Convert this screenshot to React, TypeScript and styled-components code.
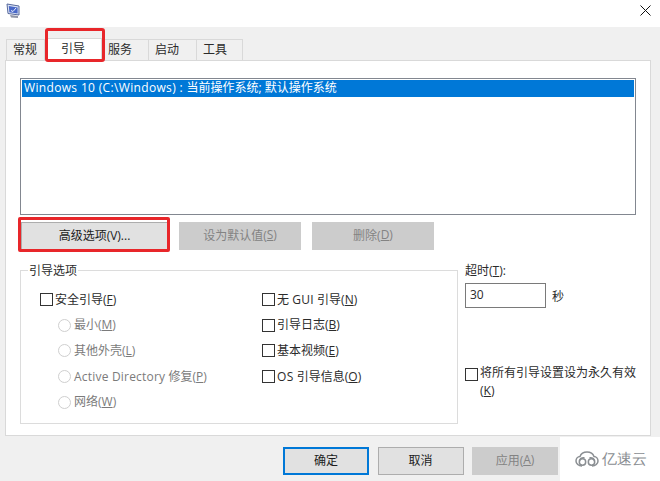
import React from "react";
import styled, { createGlobalStyle } from "styled-components";

const GlobalStyle = createGlobalStyle`
  html, body {
    margin: 0;
    padding: 0;
    background: #f0f0f0;
  }
  * {
    box-sizing: border-box;
  }
`;

const Dialog = styled.div`
  width: 660px;
  height: 481px;
  background: #f0f0f0;
  display: flex;
  flex-direction: column;
  overflow: hidden;
  font-family: "Open Sans", "Noto Sans CJK SC", sans-serif;
  font-size: 12px;
  color: #2b2b2b;
`;

const TitleBar = styled.div`
  height: 27px;
  flex: none;
  background: #fff;
  display: flex;
  align-items: flex-start;
  justify-content: space-between;
  padding: 3px 9px 0 6px;
`;

const CloseIcon = styled.svg`
  width: 11px;
  height: 11px;
  margin-top: 2px;
`;

const TabStrip = styled.div`
  height: 33px;
  flex: none;
  display: flex;
  align-items: flex-end;
  padding-left: 6px;
`;

const Tab = styled.div<{ $width: number; $active?: boolean }>`
  position: relative;
  width: ${(p) => p.$width}px;
  height: ${(p) => (p.$active ? 23 : 21)}px;
  margin-bottom: ${(p) => (p.$active ? -1 : 0)}px;
  z-index: ${(p) => (p.$active ? 2 : 0)};
  background: ${(p) => (p.$active ? "#fff" : "#f0f0f0")};
  border: 1px solid #d9d9d9;
  border-bottom: none;
  border-left-width: ${(p) => (p.$active ? 1 : 0)}px;
  display: flex;
  align-items: center;
  padding: 0 0 ${(p) => (p.$active ? 5 : 2)}px ${(p) => (p.$active ? 15 : 6)}px;
`;

const FirstTab = styled(Tab)`
  border-left-width: 1px;
`;

const RedMark = styled.div<{ $radius: number }>`
  position: absolute;
  border: 3px solid #e8262a;
  border-radius: ${(p) => p.$radius}px;
  pointer-events: none;
`;

const TabMark = styled(RedMark)`
  left: -1px;
  right: -4px;
  top: -11px;
  bottom: -1px;
`;

const ButtonMark = styled(RedMark)`
  left: -4px;
  right: -3px;
  top: -6px;
  bottom: -3px;
`;

const Panel = styled.div`
  width: 646px;
  height: 376px;
  flex: none;
  margin-left: 5px;
  background: #fff;
  border: 1px solid #d9d9d9;
  padding: 17px 13px 0 14px;
  display: flex;
  flex-direction: column;
`;

const BootList = styled.div`
  width: 616px;
  height: 137px;
  flex: none;
  border: 1px solid #828790;
  padding: 1px;
`;

const BootRow = styled.div`
  height: 17px;
  background: #0078d7;
  color: #fff;
  padding-left: 2px;
  line-height: 15px;
  white-space: nowrap;
`;

const Latin = styled.span<{ $spacing: number }>`
  letter-spacing: ${(p) => p.$spacing}px;
`;

const ButtonRow = styled.div`
  display: flex;
  gap: 11px;
  margin: 7px 0 0 1px;
`;

const Button = styled.div<{ $width: number; $disabled?: boolean; $default?: boolean }>`
  position: relative;
  width: ${(p) => p.$width}px;
  height: 28px;
  flex: none;
  background: ${(p) => (p.$disabled ? "#cccccc" : "#e1e1e1")};
  border: ${(p) => (p.$default ? "2px solid #0078d7" : p.$disabled ? "1px solid #cccccc" : "1px solid #adadad")};
  color: ${(p) => (p.$disabled ? "#838383" : "#1c1c1c")};
  display: flex;
  align-items: center;
  justify-content: center;
  padding-bottom: 3px;
`;

const OptionsArea = styled.div`
  display: flex;
  margin-top: 20px;
`;

const GroupBox = styled.div`
  position: relative;
  width: 438px;
  height: 154px;
  flex: none;
  border: 1px solid #dcdcdc;
  display: grid;
  grid-template-columns: 222px 1fr;
  padding: 16px 0 0 19px;
`;

const Legend = styled.div`
  position: absolute;
  left: 7px;
  top: -8px;
  background: #fff;
  padding: 0 1px;
  line-height: 15px;
`;

const OptionColumn = styled.div`
  display: flex;
  flex-direction: column;
`;

const OptionRow = styled.div<{ $indent?: boolean; $muted?: boolean }>`
  height: 25.6px;
  display: flex;
  align-items: center;
  gap: ${(p) => (p.$indent ? 3 : 2)}px;
  margin-left: ${(p) => (p.$indent ? 18 : 0)}px;
  color: ${(p) => (p.$muted ? "#7b7b7b" : "#2b2b2b")};
  white-space: nowrap;
`;

const OptionText = styled.span`
  margin-bottom: 2px;
`;

const CheckBox = styled.span`
  width: 13px;
  height: 13px;
  flex: none;
  border: 1px solid #333;
  background: #fff;
`;

const Radio = styled.span`
  width: 13px;
  height: 13px;
  flex: none;
  border: 1px solid #cfcfcf;
  border-radius: 50%;
  background: #fff;
`;

const Key = styled.span`
  text-decoration: underline;
  text-underline-offset: 1px;
`;

const SidePane = styled.div`
  flex: 1;
  margin: -7px 0 0 7px;
  display: flex;
  flex-direction: column;
`;

const TimeoutLabel = styled.div`
  line-height: 15px;
`;

const TimeoutRow = styled.div`
  display: flex;
  align-items: center;
  gap: 6px;
  margin-top: 5px;
`;

const TimeoutInput = styled.div`
  width: 81px;
  height: 25px;
  border: 1px solid #7a7a7a;
  padding-left: 4px;
  line-height: 22px;
`;

const PermanentRow = styled.div`
  display: flex;
  gap: 2px;
  margin-top: 59px;
`;

const PermanentBox = styled(CheckBox)`
  margin-top: 1px;
`;

const PermanentText = styled.div`
  line-height: 18px;
  white-space: nowrap;
  margin-top: -3px;
`;

const Footer = styled.div`
  flex: 1;
  display: flex;
  gap: 8.5px;
  padding: 11px 0 0 283px;
`;

const Watermark = styled.div`
  position: absolute;
  left: 560px;
  top: 437px;
  width: 100px;
  height: 44px;
  background: #fff;
  display: flex;
  align-items: center;
  gap: 3px;
  padding: 0 0 0 15px;
  color: #8a8e92;
  font-size: 15px;
`;

const App: React.FC = () => (
  <>
    <GlobalStyle />
    <Dialog>
      <TitleBar>
        <svg width="15" height="16" viewBox="0 0 15 16">
          <path d="M1 1L13 3V12L2 10.5Z" fill="#dbe3f4" stroke="#56689c" />
          <path d="M2.8 3L11.6 4.5V10.4L3.4 9.2Z" fill="#4a68c8" />
          <path d="M5 7.5L7 8.5L10 5" stroke="#e8eefc" fill="none" />
          <path d="M4 12L12 13V15L5 14.5Z" fill="#8f94a6" />
        </svg>
        <CloseIcon viewBox="0 0 11 11">
          <path d="M.5.5L10.5 10.5M10.5.5L.5 10.5" stroke="#111" fill="none" />
        </CloseIcon>
      </TitleBar>
      <TabStrip>
        <FirstTab $width={39}>常规</FirstTab>
        <Tab $width={57} $active>
          引导
          <TabMark $radius={3} />
        </Tab>
        <Tab $width={47}>服务</Tab>
        <Tab $width={48}>启动</Tab>
        <Tab $width={46}>工具</Tab>
      </TabStrip>
      <Panel>
        <BootList>
          <BootRow>
            <Latin $spacing={0.34}>Windows 10 (C:\Windows) : </Latin>当前操作系统; 默认操作系统
          </BootRow>
        </BootList>
        <ButtonRow>
          <Button $width={147}>
            高级选项(V)...
            <ButtonMark $radius={2} />
          </Button>
          <Button $width={122} $disabled>
            设为默认值(<Key>S</Key>)
          </Button>
          <Button $width={122} $disabled>
            删除(<Key>D</Key>)
          </Button>
        </ButtonRow>
        <OptionsArea>
          <GroupBox>
            <Legend>引导选项</Legend>
            <OptionColumn>
              <OptionRow>
                <CheckBox />
                <OptionText>
                  安全引导(<Key>F</Key>)
                </OptionText>
              </OptionRow>
              <OptionRow $indent $muted>
                <Radio />
                <OptionText>
                  最小(<Key>M</Key>)
                </OptionText>
              </OptionRow>
              <OptionRow $indent $muted>
                <Radio />
                <OptionText>
                  其他外壳(<Key>L</Key>)
                </OptionText>
              </OptionRow>
              <OptionRow $indent $muted>
                <Radio />
                <OptionText>
                  <Latin $spacing={0.2}>Active Directory </Latin>修复(<Key>P</Key>)
                </OptionText>
              </OptionRow>
              <OptionRow $indent $muted>
                <Radio />
                <OptionText>
                  网络(<Key>W</Key>)
                </OptionText>
              </OptionRow>
            </OptionColumn>
            <OptionColumn>
              <OptionRow>
                <CheckBox />
                <OptionText>
                  无 <Latin $spacing={0.34}>GUI</Latin> 引导(<Key>N</Key>)
                </OptionText>
              </OptionRow>
              <OptionRow>
                <CheckBox />
                <OptionText>
                  引导日志(<Key>B</Key>)
                </OptionText>
              </OptionRow>
              <OptionRow>
                <CheckBox />
                <OptionText>
                  基本视频(<Key>E</Key>)
                </OptionText>
              </OptionRow>
              <OptionRow>
                <CheckBox />
                <OptionText>
                  <Latin $spacing={0.34}>OS</Latin> 引导信息(<Key>O</Key>)
                </OptionText>
              </OptionRow>
            </OptionColumn>
          </GroupBox>
          <SidePane>
            <TimeoutLabel>
              超时(<Key>T</Key>):
            </TimeoutLabel>
            <TimeoutRow>
              <TimeoutInput>30</TimeoutInput>
              <span>秒</span>
            </TimeoutRow>
            <PermanentRow>
              <PermanentBox />
              <PermanentText>
                <div>将所有引导设置设为永久有效</div>
                <div>
                  (<Key>K</Key>)
                </div>
              </PermanentText>
            </PermanentRow>
          </SidePane>
        </OptionsArea>
      </Panel>
      <Footer>
        <Button $width={86} $default>
          确定
        </Button>
        <Button $width={86}>取消</Button>
        <Button $width={86} $disabled>
          应用(<Key>A</Key>)
        </Button>
      </Footer>
    </Dialog>
    <Watermark>
      <svg width="24" height="16" viewBox="0 0 24 16" fill="none" stroke="#8a8e92" strokeWidth="1.5">
        <path d="M7 15C3.5 15 1 12.7 1 10C1 7.4 3 5.6 5 5.5C6 2.6 9 1 12 1C15 1 18 2.6 19 5.5C21 5.6 23 7.4 23 10C23 12.7 20.5 15 17 15" />
        <circle cx="7.5" cy="11" r="3.2" />
        <circle cx="16.5" cy="11" r="3.2" />
        <path d="M4.5 10C5 7.5 7 6.5 9.5 6.8M19.5 10C19 7.5 17 6.5 14.5 6.8" />
      </svg>
      亿速云
    </Watermark>
  </>
);

export default App;
